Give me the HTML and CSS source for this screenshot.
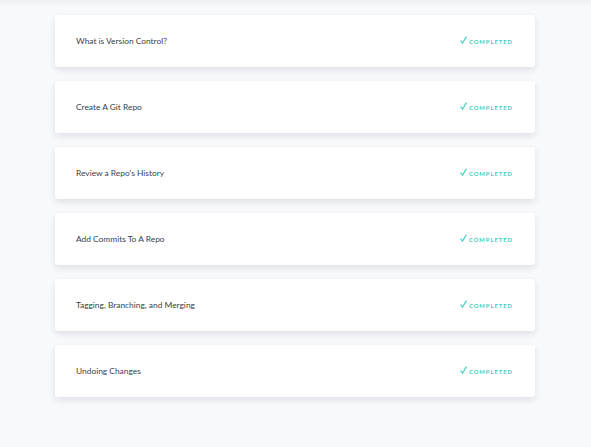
FILE: index.html
```html
<!DOCTYPE html>
<html>
<head>
<meta charset="utf-8">
<link rel="stylesheet" href="styles.css">
</head>
<body>
<div class="topbar"></div>
<main class="list">
  <div class="card"><span class="title">What is Version Control?</span><span class="status"><svg class="check" viewBox="0 0 7 8" width="7" height="8"><path d="M0.6 4.6 L2.5 7.2 L6.4 0.6" fill="none" stroke="currentColor" stroke-width="1.1"/></svg>COMPLETED</span></div>
  <div class="card"><span class="title">Create A Git Repo</span><span class="status"><svg class="check" viewBox="0 0 7 8" width="7" height="8"><path d="M0.6 4.6 L2.5 7.2 L6.4 0.6" fill="none" stroke="currentColor" stroke-width="1.1"/></svg>COMPLETED</span></div>
  <div class="card"><span class="title">Review a Repo's History</span><span class="status"><svg class="check" viewBox="0 0 7 8" width="7" height="8"><path d="M0.6 4.6 L2.5 7.2 L6.4 0.6" fill="none" stroke="currentColor" stroke-width="1.1"/></svg>COMPLETED</span></div>
  <div class="card"><span class="title">Add Commits To A Repo</span><span class="status"><svg class="check" viewBox="0 0 7 8" width="7" height="8"><path d="M0.6 4.6 L2.5 7.2 L6.4 0.6" fill="none" stroke="currentColor" stroke-width="1.1"/></svg>COMPLETED</span></div>
  <div class="card"><span class="title">Tagging, Branching, and Merging</span><span class="status"><svg class="check" viewBox="0 0 7 8" width="7" height="8"><path d="M0.6 4.6 L2.5 7.2 L6.4 0.6" fill="none" stroke="currentColor" stroke-width="1.1"/></svg>COMPLETED</span></div>
  <div class="card"><span class="title">Undoing Changes</span><span class="status"><svg class="check" viewBox="0 0 7 8" width="7" height="8"><path d="M0.6 4.6 L2.5 7.2 L6.4 0.6" fill="none" stroke="currentColor" stroke-width="1.1"/></svg>COMPLETED</span></div>
</main>
</body>
</html>
```
FILE: styles.css
```css
html, body {
  margin: 0;
  padding: 0;
  height: 100%;
}
body {
  background: #f8f9fb;
  font-family: Lato, "Open Sans", sans-serif;
  position: relative;
}
.topbar {
  position: absolute;
  top: 0;
  left: 0;
  right: 0;
  height: 8px;
  background: linear-gradient(#eef0f3, #f8f9fb);
}
.list {
  position: relative;
  display: flex;
  flex-direction: column;
  gap: 14px;
  width: 480px;
  margin-left: 55px;
  padding-top: 15px;
}
.card {
  height: 52px;
  background: #fff;
  border-radius: 3px;
  box-shadow: 0 3px 6px rgba(40, 50, 70, 0.12);
  display: flex;
  align-items: center;
  justify-content: space-between;
  padding: 0 22px 0 21px;
  box-sizing: border-box;
}
.title {
  font-size: 8.4px;
  color: #38414e;
}
.status {
  display: flex;
  align-items: center;
  gap: 2px;
  font-size: 5.8px;
  font-weight: bold;
  letter-spacing: 1px;
  color: #3ccfc0;
}
.check {
  display: block;
  margin-top: -2px;
}
```
